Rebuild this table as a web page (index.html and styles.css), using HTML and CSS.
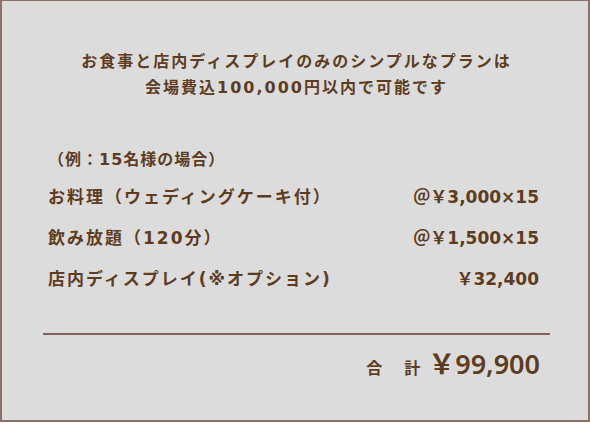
FILE: index.html
```html
<!DOCTYPE html>
<html lang="ja">
<head>
<meta charset="utf-8">
<link rel="stylesheet" href="styles.css">
</head>
<body>
<div class="card">
  <p class="lead">お食事と店内ディスプレイのみのシンプルなプランは<br>会場費込100,000円以内で可能です</p>
  <div class="example">（例：15名様の場合）</div>
  <div class="rows">
    <div class="row"><span class="name">お料理（ウェディングケーキ付）</span><span class="price">＠￥3,000×15</span></div>
    <div class="row"><span class="name">飲み放題（120分）</span><span class="price">＠￥1,500×15</span></div>
    <div class="row"><span class="name">店内ディスプレイ(※オプション)</span><span class="price">￥32,400</span></div>
  </div>
  <hr class="rule">
  <div class="total"><span class="total-label">合　計</span><span class="total-value">￥99,900</span></div>
</div>
</body>
</html>
```

FILE: styles.css
```css
html, body {
  margin: 0;
  padding: 0;
  background: #ffffff;
}
body {
  font-family: "DejaVu Sans", "Noto Sans CJK JP", sans-serif;
  color: #5e3c1f;
}
.card {
  box-sizing: border-box;
  width: 590px;
  height: 422px;
  background: #dcdcdc;
  border: 2px solid #8b716a;
  border-top-width: 1px;
  padding: 48px 38px 0 41px;
  display: flex;
  flex-direction: column;
}
.lead {
  margin: 0;
  text-align: center;
  font-size: 16px;
  font-weight: 700;
  line-height: 26px;
  letter-spacing: 2px;
}
.example {
  margin-top: 45px;
  padding-left: 5px;
  font-size: 16px;
  font-weight: 700;
  line-height: 28px;
  letter-spacing: 1px;
}
.rows {
  margin-top: 9px;
  display: flex;
  flex-direction: column;
  gap: 13px;
  padding: 0 11px 0 5px;
}
.row {
  display: flex;
  justify-content: space-between;
  font-size: 17px;
  font-weight: 700;
  line-height: 28px;
}
.name {
  letter-spacing: 2px;
}
.price {
  letter-spacing: 0;
}
.rule {
  margin: 40px 0 0;
  border: 0;
  height: 2px;
  background: #7d6456;
}
.total {
  margin-top: 11px;
  display: flex;
  justify-content: flex-end;
  align-items: baseline;
  gap: 5px;
  padding-right: 10px;
  line-height: 36px;
  font-weight: 700;
}
.total-label {
  font-size: 16px;
  letter-spacing: 3px;
}
.total-value {
  font-family: "Noto Sans", "Noto Sans CJK JP", sans-serif;
  font-size: 27px;
  font-weight: 600;
}
```
